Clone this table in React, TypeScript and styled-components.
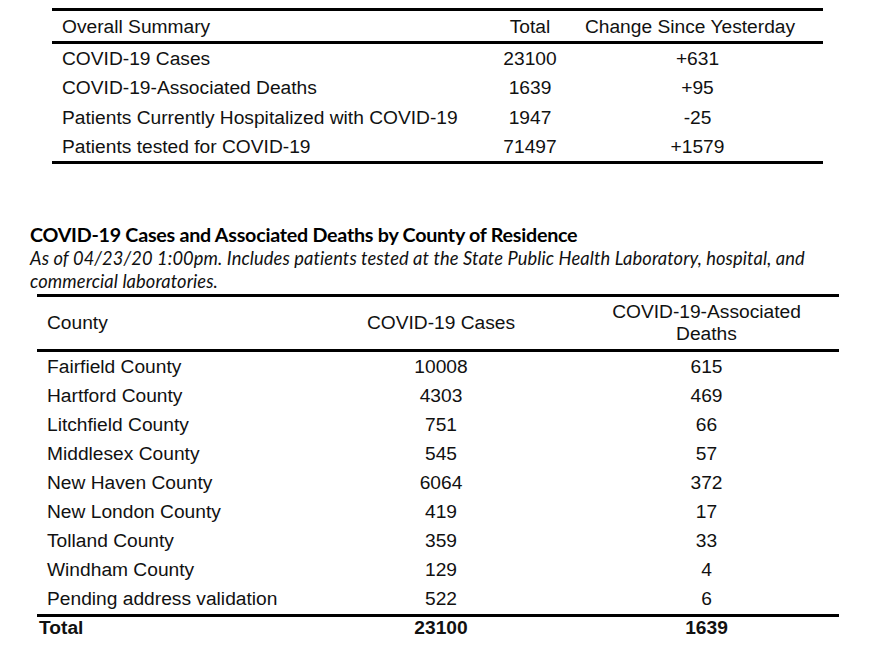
import React from "react";
import styled, { createGlobalStyle } from "styled-components";

const Global = createGlobalStyle`
  html, body { margin: 0; padding: 0; background: #fff; }
  body { font-family: "Liberation Sans", Arial, sans-serif; color: #111; }
`;

const Page = styled.div`
  width: 880px;
  height: 656px;
  padding-top: 8px;
  box-sizing: border-box;
  display: flex;
  flex-direction: column;
  overflow: hidden;
`;

const SummaryTable = styled.div`
  margin-left: 52px;
  width: 771px;
  display: grid;
  grid-template-columns: 436px 84px 251px;
  border-top: 3px solid #000;
  border-bottom: 3px solid #000;
  font-size: 19.2px;
`;

const Cell = styled.div<{ $align?: "left" | "center"; $height: number; $line?: boolean; $pl?: number; $pr?: number; $pt?: number; $bold?: boolean }>`
  height: ${(p) => p.$height}px;
  display: flex;
  align-items: center;
  justify-content: ${(p) => (p.$align === "center" ? "center" : "flex-start")};
  text-align: ${(p) => p.$align ?? "left"};
  padding-left: ${(p) => p.$pl ?? 0}px;
  padding-right: ${(p) => p.$pr ?? 0}px;
  padding-top: ${(p) => p.$pt ?? 0}px;
  border-bottom: ${(p) => (p.$line ? "3px solid #000" : "none")};
  font-weight: ${(p) => (p.$bold ? 700 : 400)};
  line-height: 22px;
  white-space: nowrap;
`;

const Heading = styled.div`
  margin-top: 59px;
  margin-left: 30px;
  font-family: Lato, "Open Sans", sans-serif;
  font-weight: 700;
  font-size: 19.7px;
  letter-spacing: -0.25px;
  line-height: 24px;
  color: #000;
`;

const Note = styled.div`
  margin-left: 30px;
  font-family: Lato, "Open Sans", sans-serif;
  font-style: italic;
  font-size: 18.3px;
  letter-spacing: 0.1px;
  line-height: 23px;
  color: #111;
  white-space: nowrap;
`;

const CountyTable = styled.div`
  margin-top: 1px;
  margin-left: 37px;
  width: 802px;
  display: grid;
  grid-template-columns: 271px 266px 265px;
  border-top: 3px solid #000;
  font-size: 19.2px;
`;

const summary = [
  ["COVID-19 Cases", "23100", "+631"],
  ["COVID-19-Associated Deaths", "1639", "+95"],
  ["Patients Currently Hospitalized with COVID-19", "1947", "-25"],
  ["Patients tested for COVID-19", "71497", "+1579"],
];

const counties = [
  ["Fairfield County", "10008", "615"],
  ["Hartford County", "4303", "469"],
  ["Litchfield County", "751", "66"],
  ["Middlesex County", "545", "57"],
  ["New Haven County", "6064", "372"],
  ["New London County", "419", "17"],
  ["Tolland County", "359", "33"],
  ["Windham County", "129", "4"],
  ["Pending address validation", "522", "6"],
];

export default function App() {
  return (
    <Page>
      <Global />
      <SummaryTable>
        <Cell $height={28} $pt={2} $line $pl={10}>Overall Summary</Cell>
        <Cell $height={28} $pt={2} $line $align="center">Total</Cell>
        <Cell $height={28} $pt={2} $line $align="center" $pr={15}>Change Since Yesterday</Cell>
        {summary.map((r) => (
          <React.Fragment key={r[0]}>
            <Cell $height={28.25} $pt={1} $pl={10}>{r[0]}</Cell>
            <Cell $height={28.25} $pt={1} $align="center">{r[1]}</Cell>
            <Cell $height={28.25} $pt={1} $align="center">{r[2]}</Cell>
          </React.Fragment>
        ))}
      </SummaryTable>
      <Heading>COVID-19 Cases and Associated Deaths by County of Residence</Heading>
      <Note>
        As of 04/23/20 1:00pm. Includes patients tested at the State Public Health Laboratory, hospital, and
        <br />
        commercial laboratories.
      </Note>
      <CountyTable>
        <Cell $height={52} $line $pl={10}>County</Cell>
        <Cell $height={52} $line $align="center">COVID-19 Cases</Cell>
        <Cell $height={52} $line $align="center">COVID-19-Associated<br />Deaths</Cell>
        {counties.map((r, i) => {
          const last = i === counties.length - 1;
          return (
            <React.Fragment key={r[0]}>
              <Cell $height={29.1} $line={last} $pl={10}>{r[0]}</Cell>
              <Cell $height={29.1} $line={last} $align="center">{r[1]}</Cell>
              <Cell $height={29.1} $line={last} $align="center">{r[2]}</Cell>
            </React.Fragment>
          );
        })}
        <Cell $height={22} $bold $pl={2}>Total</Cell>
        <Cell $height={22} $bold $align="center">23100</Cell>
        <Cell $height={22} $bold $align="center">1639</Cell>
      </CountyTable>
    </Page>
  );
}
